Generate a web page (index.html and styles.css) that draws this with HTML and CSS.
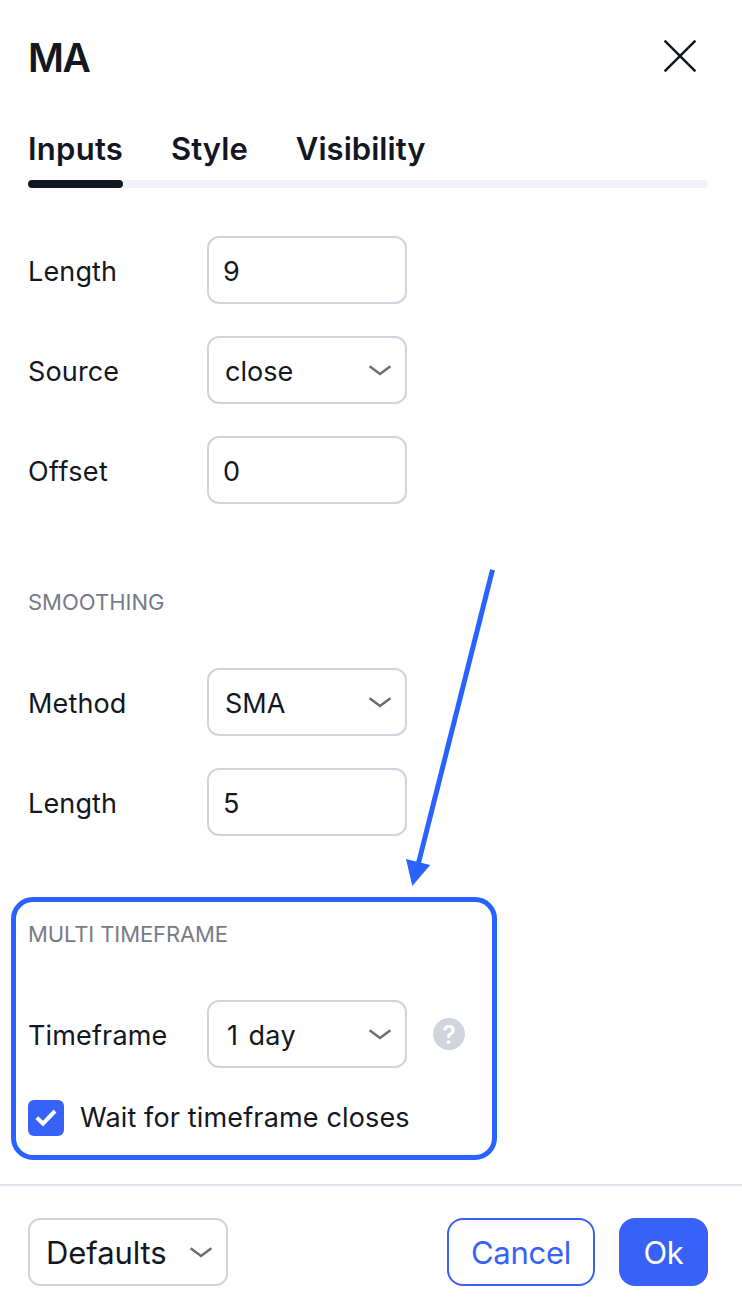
FILE: index.html
```html
<!DOCTYPE html>
<html lang="en">
<head>
    <meta charset="UTF-8">
    <meta name="viewport" content="width=device-width, initial-scale=1.0">
    <title>MA</title>
    <link rel="stylesheet" href="styles.css">
</head>
<body>

    <div class="dialog">
        <div class="header">
            <h1>MA</h1>
            <button class="close" aria-label="Close">
                <svg width="36" height="36" viewBox="0 0 36 36" fill="none" stroke="#131722" stroke-width="2.5">
                    <path d="M2.6 2.6l30.8 30.8M33.4 2.6L2.6 33.4"/>
                </svg>
            </button>
        </div>

        <div class="tabs">
            <span class="tab active">Inputs</span>
            <span class="tab">Style</span>
            <span class="tab">Visibility</span>
        </div>
        <div class="tab-line">
            <div class="tab-line-active"></div>
        </div>

        <div class="content">
            <div class="group">
                <div class="row">
                    <label for="length">Length</label>
                    <input type="text" id="length" value="9">
                </div>
                <div class="row">
                    <label>Source</label>
                    <div class="select">
                        <span>close</span>
                        <svg class="chevron" width="24" height="14" viewBox="0 0 24 14"><path d="M1.6 2.2L12 9.9l10.4-7.7"/></svg>
                    </div>
                </div>
                <div class="row">
                    <label for="offset" class="wide">Offset</label>
                    <input type="text" id="offset" value="0">
                </div>
            </div>

            <h2>SMOOTHING</h2>
            <div class="group">
                <div class="row">
                    <label>Method</label>
                    <div class="select">
                        <span>SMA</span>
                        <svg class="chevron" width="24" height="14" viewBox="0 0 24 14"><path d="M1.6 2.2L12 9.9l10.4-7.7"/></svg>
                    </div>
                </div>
                <div class="row">
                    <label for="smoothing-length">Length</label>
                    <input type="text" id="smoothing-length" value="5">
                </div>
            </div>

            <div class="highlight">
                <h2>MULTI TIMEFRAME</h2>
                <div class="group">
                    <div class="row">
                        <label>Timeframe</label>
                        <div class="select">
                            <span class="day">1 day</span>
                            <svg class="chevron" width="24" height="14" viewBox="0 0 24 14"><path d="M1.6 2.2L12 9.9l10.4-7.7"/></svg>
                        </div>
                        <span class="help">?</span>
                    </div>
                    <div class="check-row">
                        <span class="checkbox">
                            <svg width="36" height="36" viewBox="0 0 36 36" fill="none" stroke="#fff" stroke-width="4">
                                <path d="M8.8 17.6l6.2 6L27 11"/>
                            </svg>
                        </span>
                        <span class="check-label">Wait for timeframe closes</span>
                    </div>
                </div>
            </div>
        </div>

        <div class="footer">
            <div class="select defaults">
                <span>Defaults</span>
                <svg class="chevron" width="24" height="14" viewBox="0 0 24 14"><path d="M1.6 2.2L12 9.9l10.4-7.7"/></svg>
            </div>
            <div class="button-group">
                <button class="cancel">Cancel</button>
                <button class="ok">Ok</button>
            </div>
        </div>

        <!-- arrow pointing at the multi timeframe block -->
        <svg class="arrow" width="100" height="330" viewBox="0 0 100 330">
            <path d="M92.5 9.8L18 305" stroke="#2962ff" stroke-width="5"/>
            <path d="M6 299l24.2 6L12.3 326z" fill="#2962ff"/>
        </svg>
    </div>

</body>
</html>
```
FILE: styles.css
```css
* {
    box-sizing: border-box;
}

body {
    font-family: Inter, 'Liberation Sans', sans-serif;
    background: #fff;
    color: #131722;
    margin: 0;
}

.dialog {
    position: relative;
    width: 742px;
    height: 1310px;
    overflow: hidden;
}

.header {
    display: flex;
    justify-content: space-between;
    align-items: center;
    height: 114px;
    padding: 0 44px 0 28px;
}

h1 {
    font-size: 39px;
    font-weight: 600;
    line-height: 48px;
    letter-spacing: -1.4px;
    margin: 2px 0 0;
}

button {
    font-family: inherit;
    cursor: pointer;
}

.close {
    display: flex;
    background: none;
    border: none;
    padding: 0;
    margin-top: -2px;
}

.tabs {
    display: flex;
    gap: 48px;
    height: 66px;
    padding-left: 28px;
}

.tab {
    font-size: 31px;
    font-weight: 600;
    line-height: 69px;
    letter-spacing: 0.05px;
}

.tab.active {
    width: 95px;
    letter-spacing: 0.25px;
}

.tab-line {
    height: 8px;
    margin: 0 34px 0 28px;
    border-radius: 4px;
    background: #f0f2f8;
}

.tab-line-active {
    width: 95px;
    height: 8px;
    border-radius: 4px;
    background: #131722;
}

.content {
    height: 996px;
    padding: 48px 28px 0;
}

.group {
    display: flex;
    flex-direction: column;
    gap: 32px;
}

.row {
    display: flex;
    align-items: center;
    height: 68px;
}

label {
    width: 179px;
    font-size: 27px;
    letter-spacing: 0.15px;
    padding-top: 2px;
}

label.wide {
    letter-spacing: 0.4px;
}

input,
.select {
    width: 200px;
    height: 68px;
    border: 2px solid #d1d4dc;
    border-radius: 12px;
    background: #fff;
    color: #131722;
    font-family: inherit;
    font-size: 27px;
}

input {
    padding: 3px 14px 0;
    outline: none;
}

.select {
    display: flex;
    justify-content: space-between;
    align-items: center;
    padding: 0 13px 0 16px;
}

.select span {
    padding-top: 2px;
}

.select .day {
    padding-left: 2px;
    letter-spacing: 0.4px;
    word-spacing: 2px;
}

.chevron {
    fill: none;
    stroke: #6a6d78;
    stroke-width: 2.5;
    margin-top: 1px;
}

h2 {
    font-size: 22px;
    font-weight: 400;
    line-height: 32px;
    color: #787b86;
    margin: 82px 0 50px;
}

.highlight {
    width: 486px;
    height: 263px;
    margin: 61px 0 0 -17px;
    padding: 16px 12px 0;
    border: 5px solid #2962ff;
    border-radius: 22px;
}

.highlight h2 {
    margin-top: 0;
    letter-spacing: -0.1px;
}

.help {
    width: 32px;
    height: 32px;
    margin-left: 26px;
    border-radius: 50%;
    background: #d1d4dc;
    color: #fff;
    font-size: 25px;
    font-weight: 600;
    line-height: 34px;
    text-align: center;
}

.check-row {
    display: flex;
    align-items: center;
    gap: 16px;
    height: 36px;
}

.checkbox {
    display: flex;
    width: 36px;
    height: 36px;
    border-radius: 6px;
    background: #3861f7;
}

.check-label {
    font-size: 27px;
    letter-spacing: 0.15px;
    padding-bottom: 2px;
}

.footer {
    display: flex;
    justify-content: space-between;
    align-items: center;
    height: 126px;
    padding: 8px 34px 0 28px;
    border-top: 2px solid #e0e3eb;
}

.defaults {
    font-size: 31px;
    letter-spacing: -0.1px;
}

.defaults span {
    padding-top: 0;
}

.button-group {
    display: flex;
    gap: 24px;
}

.button-group button {
    height: 68px;
    border: 2px solid #3861f7;
    border-radius: 16px;
    font-size: 31px;
    letter-spacing: -0.25px;
    padding: 0;
}

.cancel {
    width: 148px;
    background: #fff;
    color: #3861f7;
}

.ok {
    width: 89px;
    background: #3861f7;
    color: #fff;
}

.arrow {
    position: absolute;
    left: 400px;
    top: 560px;
}
```
